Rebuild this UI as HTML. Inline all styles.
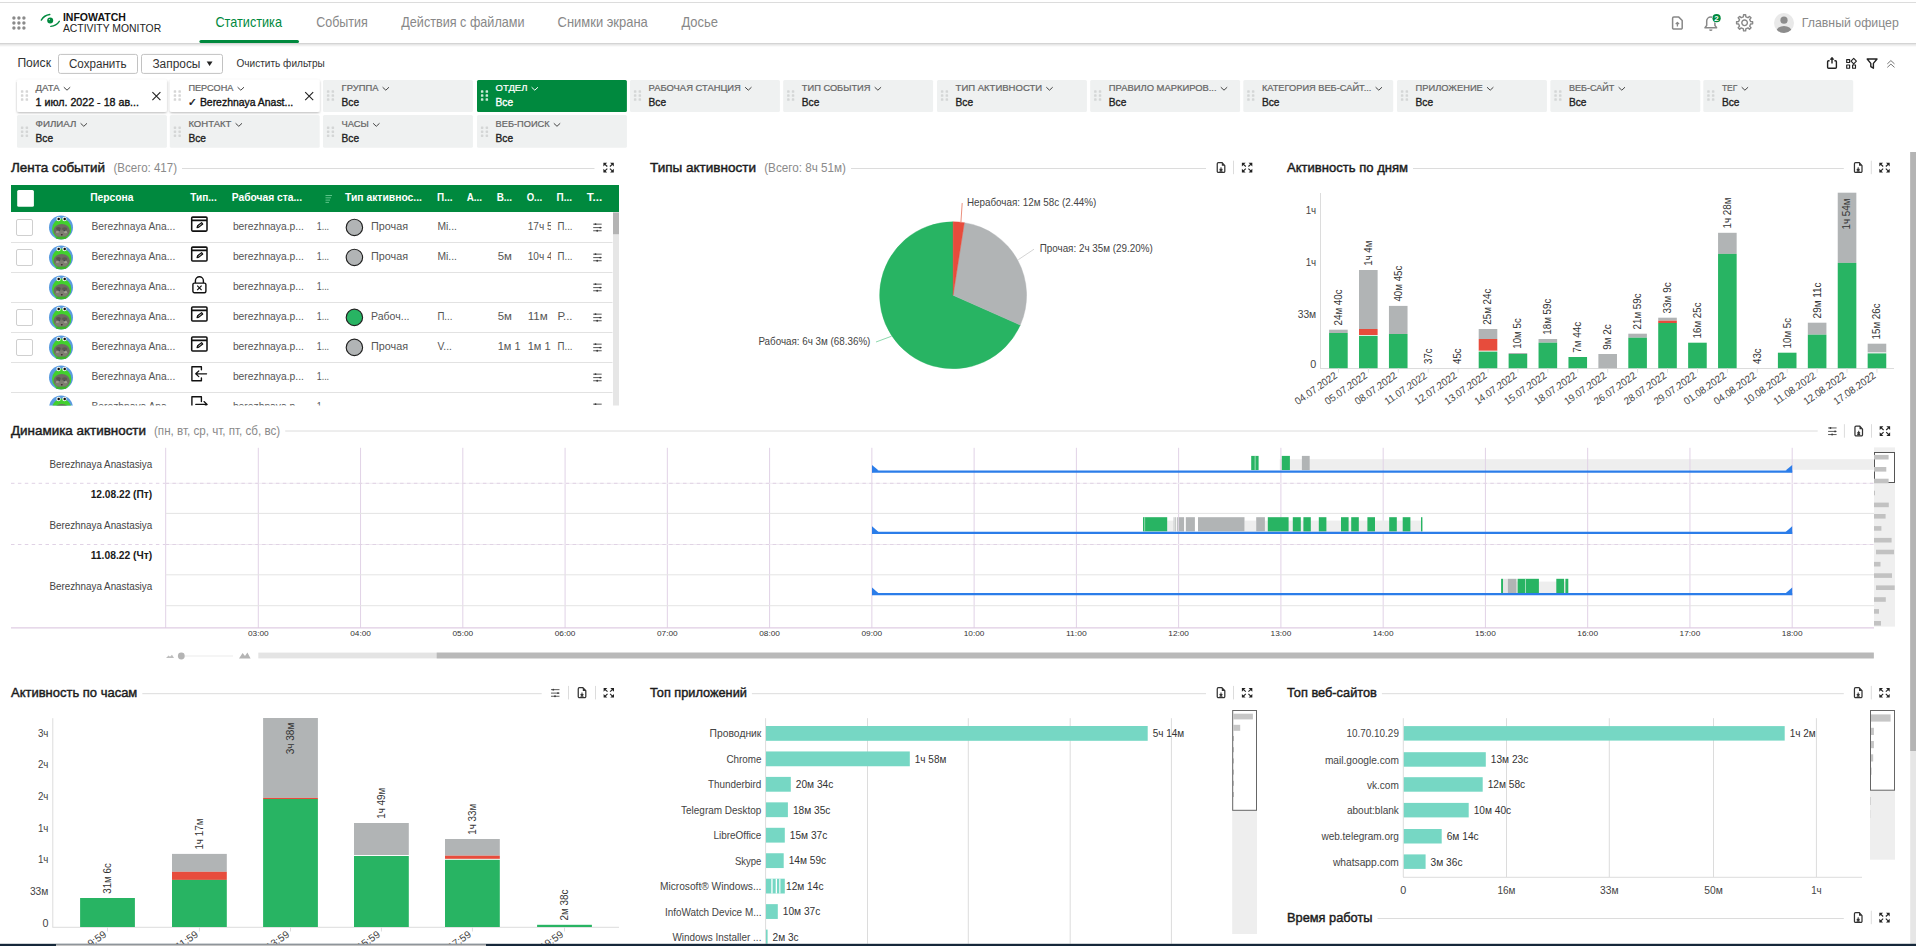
<!DOCTYPE html>
<html><head><meta charset="utf-8"><title>InfoWatch Activity Monitor</title>
<style>
html,body{margin:0;padding:0;background:#fff;overflow:hidden;width:1916px;height:946px}
svg{display:block;font-family:'Liberation Sans', sans-serif;}
text{white-space:pre}
</style></head><body>
<svg width="1916" height="946" viewBox="0 0 1916 946" font-family='"Liberation Sans", sans-serif'>
<defs>
<linearGradient id="hsh" x1="0" y1="0" x2="0" y2="1"><stop offset="0" stop-color="#000" stop-opacity="0.16"/><stop offset="1" stop-color="#000" stop-opacity="0"/></linearGradient>
<filter id="tsh" x="-10%" y="-20%" width="120%" height="150%"><feDropShadow dx="0" dy="1" stdDeviation="1" flood-color="#000" flood-opacity="0.28"/></filter>
<clipPath id="avc"><circle cx="0" cy="0" r="12"/></clipPath>
<g id="avatar">
  <circle cx="0" cy="0" r="12" fill="#5a9be0"/>
  <g clip-path="url(#avc)">
    <ellipse cx="0.7" cy="1.6" rx="9.7" ry="10.4" fill="#42cf2e"/>
    <ellipse cx="0.7" cy="3.4" rx="8.2" ry="6.9" fill="#6d6b62"/>
    <ellipse cx="-2.6" cy="1.2" rx="2.4" ry="1.6" fill="#57554e"/>
    <ellipse cx="3.6" cy="1.4" rx="2.6" ry="1.6" fill="#5b5952"/>
    <ellipse cx="0.6" cy="6.2" rx="6.4" ry="3.4" fill="#7f7d72"/>
    <ellipse cx="-3.6" cy="4.6" rx="1.6" ry="1.1" fill="#9a988e"/>
    <ellipse cx="4.6" cy="4.8" rx="1.6" ry="1.1" fill="#a09e94"/>
    <circle cx="-1.8" cy="3.2" r="0.7" fill="#2f3e46"/><circle cx="3.2" cy="3.2" r="0.7" fill="#2f3e46"/>
    <ellipse cx="0.8" cy="7.3" rx="0.9" ry="0.7" fill="#3a2422"/>
    <ellipse cx="0.7" cy="10.7" rx="6.4" ry="1.5" fill="#3cb42a"/>
  </g>
  <circle cx="-2.5" cy="-8.4" r="2.2" fill="#f4f8f4"/><circle cx="3.5" cy="-8.4" r="2.2" fill="#f4f8f4"/>
  <circle cx="-2.3" cy="-8.3" r="1.25" fill="#0c0c0c"/><circle cx="3.7" cy="-8.3" r="1.25" fill="#0c0c0c"/>
</g>
<g id="ic-expand" fill="#222" stroke="#222" stroke-width="1.15">
  <path d="M0 0 H3.7 L0 3.7 Z" stroke="none"/><path d="M1.3 1.3 L3.9 3.7"/>
  <path d="M10.4 0 H6.7 L10.4 3.7 Z" stroke="none"/><path d="M9.1 1.3 L6.5 3.7"/>
  <path d="M0 9.6 H3.7 L0 5.9 Z" stroke="none"/><path d="M1.3 8.3 L3.9 5.9"/>
  <path d="M10.4 9.6 H6.7 L10.4 5.9 Z" stroke="none"/><path d="M9.1 8.3 L6.5 5.9"/>
</g>
<g id="ic-file" stroke="#333" stroke-width="1.25" fill="none" stroke-linejoin="round">
  <path d="M0.65 1.8 a1.15 1.15 0 0 1 1.15 -1.15 H5.3 L8.2 3.7 V9.3 a1.15 1.15 0 0 1 -1.15 1.15 H1.8 a1.15 1.15 0 0 1 -1.15 -1.15 Z"/>
  <path d="M5.2 0.7 V3.8 H8.2 Z" fill="#333" stroke="none"/>
  <path d="M4.4 5.4 V8.2 M3 7.1 L4.4 8.4 L5.8 7.1 M2.9 9.2 H5.9" stroke-width="1.05"/>
</g>
<g id="ic-sliders" stroke="#484848" stroke-width="0.9" fill="#3c3c3c">
  <path d="M0.4 0.95 H8.9 M0.4 4.4 H8.9 M0.4 7.55 H8.9" fill="none"/>
  <circle cx="2.7" cy="0.95" r="0.95" stroke="none"/><circle cx="7.4" cy="4.4" r="0.95" stroke="none"/><circle cx="4.4" cy="7.55" r="0.95" stroke="none"/>
</g>
<g id="ic-win" stroke="#111" stroke-width="1.55" fill="none" stroke-linejoin="round">
  <rect x="0.7" y="0.7" width="15.3" height="14" rx="1"/>
  <path d="M0.7 3.9 H16" stroke-width="1.7"/>
  <path d="M6 11.2 L6.6 9.2 L10.6 6.2 L11.8 7.6 L7.9 10.7 Z" stroke-width="1.1" fill="#111"/>
  <path d="M7.3 10 L10.6 7.4" stroke="#fff" stroke-width="0.7"/>
</g>
<g id="ic-lock" stroke="#111" stroke-width="1.4" fill="none" stroke-linejoin="round">
  <rect x="0.7" y="6.4" width="13" height="9.6" rx="1.5"/>
  <path d="M3.2 6.4 V4 a4 4 0 0 1 8 0 V6.4"/>
  <path d="M5 9 L9.4 13.4 M9.4 9 L5 13.4" stroke-width="1.2"/>
</g>
<g id="ic-login" stroke="#111" stroke-width="1.4" fill="none" stroke-linejoin="round" stroke-linecap="round">
  <path d="M10.2 3.6 V0.7 H0.7 V14.7 H10.2 V11.8"/>
  <path d="M15.4 7.7 H4.6 M7.6 4.9 L4.5 7.7 L7.6 10.5" stroke-width="1.2"/>
</g>
<g id="ic-logout" stroke="#111" stroke-width="1.4" fill="none" stroke-linejoin="round" stroke-linecap="round">
  <path d="M10.2 5.4 V0.7 H0.7 V14.7"/>
  <path d="M4.6 8.3 H15.8 M12.8 5.5 L15.9 8.3 L12.8 11.1" stroke-width="1.3"/>
</g>
<g id="ic-chev" stroke-width="1" fill="none"><path d="M0 0 L3.2 3 L6.4 0"/></g>
<g id="ic-drag">
  <rect x="0" y="0" width="2.5" height="2.5" rx="0.6"/><rect x="4.7" y="0" width="2.5" height="2.5" rx="0.6"/>
  <rect x="0" y="4" width="2.5" height="2.5" rx="0.6"/><rect x="4.7" y="4" width="2.5" height="2.5" rx="0.6"/>
  <rect x="0" y="8" width="2.5" height="2.5" rx="0.6"/><rect x="4.7" y="8" width="2.5" height="2.5" rx="0.6"/>
</g>
</defs>
<rect x="0.00" y="43.00" width="1916.00" height="4.00" fill="url(#hsh)" />
<rect x="0.00" y="0.00" width="1916.00" height="43.00" fill="#fff" />
<line x1="0.00" y1="2.50" x2="1916.00" y2="2.50" stroke="#dcdcdc" stroke-width="1" />
<line x1="0.00" y1="43.50" x2="1916.00" y2="43.50" stroke="#d4d4d4" stroke-width="1" />
<circle cx="13.90" cy="18.00" r="1.70" fill="#8a8a8a" />
<circle cx="13.90" cy="23.00" r="1.70" fill="#8a8a8a" />
<circle cx="13.90" cy="28.00" r="1.70" fill="#8a8a8a" />
<circle cx="18.90" cy="18.00" r="1.70" fill="#8a8a8a" />
<circle cx="18.90" cy="23.00" r="1.70" fill="#8a8a8a" />
<circle cx="18.90" cy="28.00" r="1.70" fill="#8a8a8a" />
<circle cx="23.90" cy="18.00" r="1.70" fill="#8a8a8a" />
<circle cx="23.90" cy="23.00" r="1.70" fill="#8a8a8a" />
<circle cx="23.90" cy="28.00" r="1.70" fill="#8a8a8a" />
<path d="M41.3 20.1 A11.5 11.5 0 0 1 49.8 14.5" fill="none" stroke="#00893e" stroke-width="1.4" stroke-linecap="round"/>
<path d="M50.8 26.4 A11.5 11.5 0 0 0 59.3 21.3" fill="none" stroke="#00893e" stroke-width="1.4" stroke-linecap="round"/>
<circle cx="50.20" cy="20.40" r="3.00" fill="#00893e" />
<circle cx="49.40" cy="19.60" r="0.70" fill="#bfe6cf" />
<text x="62.90" y="21.00" font-size="10.4" fill="#111" font-weight="bold" textLength="63.00" lengthAdjust="spacingAndGlyphs" >INFOWATCH</text>
<text x="62.90" y="32.00" font-size="10.4" fill="#222" textLength="98.30" lengthAdjust="spacingAndGlyphs" >ACTIVITY MONITOR</text>
<text x="215.40" y="27.00" font-size="14.2" fill="#00893e" textLength="66.60" lengthAdjust="spacingAndGlyphs" >Статистика</text>
<text x="316.20" y="27.00" font-size="14.2" fill="#888" textLength="51.60" lengthAdjust="spacingAndGlyphs" >События</text>
<text x="401.30" y="27.00" font-size="14.2" fill="#888" textLength="123.20" lengthAdjust="spacingAndGlyphs" >Действия с файлами</text>
<text x="557.60" y="27.00" font-size="14.2" fill="#888" textLength="90.20" lengthAdjust="spacingAndGlyphs" >Снимки экрана</text>
<text x="681.40" y="27.00" font-size="14.2" fill="#888" textLength="36.60" lengthAdjust="spacingAndGlyphs" >Досье</text>
<rect x="199.40" y="40.00" width="99.60" height="3.10" fill="#00893e" rx="1.55"/>
<g transform="translate(1671.8,16.3)" stroke="#888" stroke-width="1.5" fill="none" stroke-linejoin="round">
<path d="M0.8 2 a1.2 1.2 0 0 1 1.2 -1.2 H7 L10.4 4.2 V11.6 a1.2 1.2 0 0 1 -1.2 1.2 H2 a1.2 1.2 0 0 1 -1.2 -1.2 Z" stroke="#888" stroke-width="1.5" />
<path d="M5.6 10.2 V6.2 M3.9 7.8 L5.6 6.1 L7.3 7.8" stroke="#888" stroke-width="1.3" />
</g>
<g transform="translate(1704,14.5)" fill="none" stroke="#888" stroke-width="1.5" stroke-linejoin="round">
<path d="M1 13.3 H12.6 L10.9 10.9 V6.6 a4.1 4.1 0 0 0 -8.2 0 V10.9 Z" stroke="#888" stroke-width="1.5" />
<path d="M5.6 15 a1.3 1.3 0 0 0 2.4 0" stroke="#888" stroke-width="1.4" />
</g>
<circle cx="1716.60" cy="18.20" r="4.70" fill="#fff" />
<circle cx="1716.60" cy="18.20" r="4.10" fill="#00893e" />
<text x="1716.60" y="21.10" font-size="8" fill="#fff" font-weight="bold" text-anchor="middle" >2</text>
<g transform="translate(1744.6,22.8)">
<path d="M-1.21 -5.98 L-1.05 -8.03 L1.05 -8.03 L1.21 -5.98 L3.37 -5.08 L4.94 -6.42 L6.42 -4.94 L5.08 -3.37 L5.98 -1.21 L8.03 -1.05 L8.03 1.05 L5.98 1.21 L5.08 3.37 L6.42 4.94 L4.94 6.42 L3.37 5.08 L1.21 5.98 L1.05 8.03 L-1.05 8.03 L-1.21 5.98 L-3.37 5.08 L-4.94 6.42 L-6.42 4.94 L-5.08 3.37 L-5.98 1.21 L-8.03 1.05 L-8.03 -1.05 L-5.98 -1.21 L-5.08 -3.37 L-6.42 -4.94 L-4.94 -6.42 L-3.37 -5.08 Z" fill="none" stroke="#888" stroke-width="1.4" stroke-linejoin="round"/>
<circle cx="0" cy="0" r="2.8" fill="none" stroke="#888" stroke-width="1.4"/>
</g>
<circle cx="1784.00" cy="23.00" r="10.00" fill="#e9e9e9" />
<clipPath id="uc"><circle cx="1784" cy="23" r="10"/></clipPath>
<g clip-path="url(#uc)">
<circle cx="1784.00" cy="20.20" r="3.60" fill="#8c8c8c" />
<ellipse cx="1784" cy="31.2" rx="7.6" ry="5.2" fill="#8c8c8c"/>
</g>
<text x="1801.80" y="26.90" font-size="13.2" fill="#888" textLength="97.00" lengthAdjust="spacingAndGlyphs" >Главный офицер</text>
<text x="17.40" y="66.80" font-size="12.3" fill="#333" textLength="33.60" lengthAdjust="spacingAndGlyphs" >Поиск</text>
<rect x="58.50" y="54.40" width="79.00" height="19.00" fill="#fff" stroke="#c2c2c2" stroke-width="1" rx="2"/>
<text x="68.90" y="67.90" font-size="12.5" fill="#333" textLength="57.80" lengthAdjust="spacingAndGlyphs" >Сохранить</text>
<rect x="141.50" y="54.40" width="81.00" height="19.00" fill="#fff" stroke="#c2c2c2" stroke-width="1" rx="2"/>
<text x="152.40" y="67.90" font-size="12.5" fill="#333" textLength="48.00" lengthAdjust="spacingAndGlyphs" >Запросы</text>
<path d="M206.7 61.6 H212.5 L209.6 66 Z" fill="#222" />
<text x="236.50" y="66.90" font-size="10.4" fill="#333" textLength="88.30" lengthAdjust="spacingAndGlyphs" >Очистить фильтры</text>
<g stroke="#222" stroke-width="1.4" fill="none" stroke-linejoin="round">
<path d="M1829.6 60.7 H1828.6 a1 1 0 0 0 -1 1 V67.3 a1 1 0 0 0 1 1 H1835.4 a1 1 0 0 0 1 -1 V61.7 a1 1 0 0 0 -1 -1 H1834.4 M1832 63.6 V58.2" />
<path d="M1830.3 59.4 L1832 57.2 L1833.7 59.4 Z" fill="#222" stroke-width="0.8" />
<path d="M1846.7 59.6 H1849.6 V62.5 H1846.7 Z M1846.7 65 H1849.6 V68.2 H1846.7 Z M1852.6 65 H1855.5 V68.2 H1852.6 Z M1853.7 58.4 L1856.4 61.1 L1853.7 63.8 L1851 61.1 Z" stroke-width="1.15" />
<path d="M1867.2 59 H1877 L1873.4 63.4 V68.2 L1870.8 66.6 V63.4 Z" />
<path d="M1887.3 63.9 L1890.9 60.6 L1894.5 63.9 M1887.3 67.4 L1890.9 64.1 L1894.5 67.4" stroke="#666" stroke-width="0.9" />
</g>
<rect x="17.00" y="79.60" width="149.90" height="32.40" fill="#fff" rx="2" filter="url(#tsh)"/>
<use href="#ic-drag" x="20.90" y="90.30" fill="#d6d6d6"/>
<text x="35.60" y="90.60" font-size="9.6" fill="#666" textLength="24.00" lengthAdjust="spacingAndGlyphs" stroke="#666" stroke-width="0.22">ДАТА</text>
<use href="#ic-chev" x="63.80" y="87.20" stroke="#444"/>
<text x="35.60" y="106.00" font-size="10.9" fill="#111" textLength="103.40" lengthAdjust="spacingAndGlyphs" stroke="#111" stroke-width="0.35">1 июл. 2022 - 18 ав...</text>
<path d="M152.40 92.10000000000001 l8 8 m0 -8 l-8 8" stroke="#222" stroke-width="1.1" />
<rect x="169.80" y="79.60" width="149.90" height="32.40" fill="#fff" rx="2" filter="url(#tsh)"/>
<use href="#ic-drag" x="173.70" y="90.30" fill="#d6d6d6"/>
<text x="188.40" y="90.60" font-size="9.6" fill="#666" textLength="45.00" lengthAdjust="spacingAndGlyphs" stroke="#666" stroke-width="0.22">ПЕРСОНА</text>
<use href="#ic-chev" x="237.60" y="87.20" stroke="#444"/>
<text x="188.40" y="106.00" font-size="10.9" fill="#111" textLength="104.80" lengthAdjust="spacingAndGlyphs" stroke="#111" stroke-width="0.35">✓ Berezhnaya Anast...</text>
<path d="M305.20 92.10000000000001 l8 8 m0 -8 l-8 8" stroke="#222" stroke-width="1.1" />
<rect x="323.00" y="79.90" width="149.90" height="32.10" fill="#eff1f1" rx="1.5"/>
<use href="#ic-drag" x="326.90" y="90.30" fill="#d4d6d6"/>
<text x="341.60" y="90.60" font-size="9.6" fill="#666" textLength="36.80" lengthAdjust="spacingAndGlyphs" stroke="#666" stroke-width="0.22">ГРУППА</text>
<use href="#ic-chev" x="382.60" y="87.20" stroke="#444"/>
<text x="341.60" y="106.00" font-size="10.9" fill="#222" textLength="17.50" lengthAdjust="spacingAndGlyphs" stroke="#222" stroke-width="0.35">Все</text>
<rect x="477.00" y="79.90" width="149.90" height="32.10" fill="#00893e" rx="1.5"/>
<use href="#ic-drag" x="480.90" y="90.30" fill="#c9ead6"/>
<text x="495.60" y="90.60" font-size="9.6" fill="#fff" textLength="31.80" lengthAdjust="spacingAndGlyphs" stroke="#fff" stroke-width="0.22">ОТДЕЛ</text>
<use href="#ic-chev" x="531.60" y="87.20" stroke="#fff"/>
<text x="495.60" y="106.00" font-size="10.9" fill="#fff" textLength="17.50" lengthAdjust="spacingAndGlyphs" stroke="#fff" stroke-width="0.35">Все</text>
<rect x="630.00" y="79.90" width="149.90" height="32.10" fill="#eff1f1" rx="1.5"/>
<use href="#ic-drag" x="633.90" y="90.30" fill="#d4d6d6"/>
<text x="648.60" y="90.60" font-size="9.6" fill="#666" textLength="92.30" lengthAdjust="spacingAndGlyphs" stroke="#666" stroke-width="0.22">РАБОЧАЯ СТАНЦИЯ</text>
<use href="#ic-chev" x="745.10" y="87.20" stroke="#444"/>
<text x="648.60" y="106.00" font-size="10.9" fill="#222" textLength="17.50" lengthAdjust="spacingAndGlyphs" stroke="#222" stroke-width="0.35">Все</text>
<rect x="783.20" y="79.90" width="149.90" height="32.10" fill="#eff1f1" rx="1.5"/>
<use href="#ic-drag" x="787.10" y="90.30" fill="#d4d6d6"/>
<text x="801.80" y="90.60" font-size="9.6" fill="#666" textLength="68.70" lengthAdjust="spacingAndGlyphs" stroke="#666" stroke-width="0.22">ТИП СОБЫТИЯ</text>
<use href="#ic-chev" x="874.70" y="87.20" stroke="#444"/>
<text x="801.80" y="106.00" font-size="10.9" fill="#222" textLength="17.50" lengthAdjust="spacingAndGlyphs" stroke="#222" stroke-width="0.35">Все</text>
<rect x="937.00" y="79.90" width="149.90" height="32.10" fill="#eff1f1" rx="1.5"/>
<use href="#ic-drag" x="940.90" y="90.30" fill="#d4d6d6"/>
<text x="955.60" y="90.60" font-size="9.6" fill="#666" textLength="86.50" lengthAdjust="spacingAndGlyphs" stroke="#666" stroke-width="0.22">ТИП АКТИВНОСТИ</text>
<use href="#ic-chev" x="1046.30" y="87.20" stroke="#444"/>
<text x="955.60" y="106.00" font-size="10.9" fill="#222" textLength="17.50" lengthAdjust="spacingAndGlyphs" stroke="#222" stroke-width="0.35">Все</text>
<rect x="1090.20" y="79.90" width="149.90" height="32.10" fill="#eff1f1" rx="1.5"/>
<use href="#ic-drag" x="1094.10" y="90.30" fill="#d4d6d6"/>
<text x="1108.80" y="90.60" font-size="9.6" fill="#666" textLength="107.80" lengthAdjust="spacingAndGlyphs" stroke="#666" stroke-width="0.22">ПРАВИЛО МАРКИРОВ...</text>
<use href="#ic-chev" x="1220.80" y="87.20" stroke="#444"/>
<text x="1108.80" y="106.00" font-size="10.9" fill="#222" textLength="17.50" lengthAdjust="spacingAndGlyphs" stroke="#222" stroke-width="0.35">Все</text>
<rect x="1243.30" y="79.90" width="149.90" height="32.10" fill="#eff1f1" rx="1.5"/>
<use href="#ic-drag" x="1247.20" y="90.30" fill="#d4d6d6"/>
<text x="1261.90" y="90.60" font-size="9.6" fill="#666" textLength="109.50" lengthAdjust="spacingAndGlyphs" stroke="#666" stroke-width="0.22">КАТЕГОРИЯ ВЕБ-САЙТ...</text>
<use href="#ic-chev" x="1375.60" y="87.20" stroke="#444"/>
<text x="1261.90" y="106.00" font-size="10.9" fill="#222" textLength="17.50" lengthAdjust="spacingAndGlyphs" stroke="#222" stroke-width="0.35">Все</text>
<rect x="1397.00" y="79.90" width="149.90" height="32.10" fill="#eff1f1" rx="1.5"/>
<use href="#ic-drag" x="1400.90" y="90.30" fill="#d4d6d6"/>
<text x="1415.60" y="90.60" font-size="9.6" fill="#666" textLength="67.20" lengthAdjust="spacingAndGlyphs" stroke="#666" stroke-width="0.22">ПРИЛОЖЕНИЕ</text>
<use href="#ic-chev" x="1487.00" y="87.20" stroke="#444"/>
<text x="1415.60" y="106.00" font-size="10.9" fill="#222" textLength="17.50" lengthAdjust="spacingAndGlyphs" stroke="#222" stroke-width="0.35">Все</text>
<rect x="1550.40" y="79.90" width="149.90" height="32.10" fill="#eff1f1" rx="1.5"/>
<use href="#ic-drag" x="1554.30" y="90.30" fill="#d4d6d6"/>
<text x="1569.00" y="90.60" font-size="9.6" fill="#666" textLength="45.40" lengthAdjust="spacingAndGlyphs" stroke="#666" stroke-width="0.22">ВЕБ-САЙТ</text>
<use href="#ic-chev" x="1618.60" y="87.20" stroke="#444"/>
<text x="1569.00" y="106.00" font-size="10.9" fill="#222" textLength="17.50" lengthAdjust="spacingAndGlyphs" stroke="#222" stroke-width="0.35">Все</text>
<rect x="1703.30" y="79.90" width="149.90" height="32.10" fill="#eff1f1" rx="1.5"/>
<use href="#ic-drag" x="1707.20" y="90.30" fill="#d4d6d6"/>
<text x="1721.90" y="90.60" font-size="9.6" fill="#666" textLength="15.60" lengthAdjust="spacingAndGlyphs" stroke="#666" stroke-width="0.22">ТЕГ</text>
<use href="#ic-chev" x="1741.70" y="87.20" stroke="#444"/>
<text x="1721.90" y="106.00" font-size="10.9" fill="#222" textLength="17.50" lengthAdjust="spacingAndGlyphs" stroke="#222" stroke-width="0.35">Все</text>
<rect x="17.00" y="115.00" width="149.90" height="32.70" fill="#eff1f1" rx="1.5"/>
<use href="#ic-drag" x="20.90" y="126.40" fill="#d4d6d6"/>
<text x="35.60" y="126.70" font-size="9.6" fill="#666" textLength="40.80" lengthAdjust="spacingAndGlyphs" stroke="#666" stroke-width="0.22">ФИЛИАЛ</text>
<use href="#ic-chev" x="80.60" y="123.30" stroke="#444"/>
<text x="35.60" y="141.80" font-size="10.9" fill="#222" textLength="17.50" lengthAdjust="spacingAndGlyphs" stroke="#222" stroke-width="0.35">Все</text>
<rect x="169.80" y="115.00" width="149.90" height="32.70" fill="#eff1f1" rx="1.5"/>
<use href="#ic-drag" x="173.70" y="126.40" fill="#d4d6d6"/>
<text x="188.40" y="126.70" font-size="9.6" fill="#666" textLength="43.00" lengthAdjust="spacingAndGlyphs" stroke="#666" stroke-width="0.22">КОНТАКТ</text>
<use href="#ic-chev" x="235.60" y="123.30" stroke="#444"/>
<text x="188.40" y="141.80" font-size="10.9" fill="#222" textLength="17.50" lengthAdjust="spacingAndGlyphs" stroke="#222" stroke-width="0.35">Все</text>
<rect x="323.00" y="115.00" width="149.90" height="32.70" fill="#eff1f1" rx="1.5"/>
<use href="#ic-drag" x="326.90" y="126.40" fill="#d4d6d6"/>
<text x="341.60" y="126.70" font-size="9.6" fill="#666" textLength="27.30" lengthAdjust="spacingAndGlyphs" stroke="#666" stroke-width="0.22">ЧАСЫ</text>
<use href="#ic-chev" x="373.10" y="123.30" stroke="#444"/>
<text x="341.60" y="141.80" font-size="10.9" fill="#222" textLength="17.50" lengthAdjust="spacingAndGlyphs" stroke="#222" stroke-width="0.35">Все</text>
<rect x="477.00" y="115.00" width="149.90" height="32.70" fill="#eff1f1" rx="1.5"/>
<use href="#ic-drag" x="480.90" y="126.40" fill="#d4d6d6"/>
<text x="495.60" y="126.70" font-size="9.6" fill="#666" textLength="54.00" lengthAdjust="spacingAndGlyphs" stroke="#666" stroke-width="0.22">ВЕБ-ПОИСК</text>
<use href="#ic-chev" x="553.80" y="123.30" stroke="#444"/>
<text x="495.60" y="141.80" font-size="10.9" fill="#222" textLength="17.50" lengthAdjust="spacingAndGlyphs" stroke="#222" stroke-width="0.35">Все</text>
<text x="11.00" y="171.70" font-size="13.4" fill="#1c1c1c" textLength="94.00" lengthAdjust="spacingAndGlyphs" stroke="#1c1c1c" stroke-width="0.45">Лента событий</text>
<text x="113.50" y="171.70" font-size="12.8" fill="#8a8a8a" textLength="63.50" lengthAdjust="spacingAndGlyphs" >(Всего: 417)</text>
<line x1="182.00" y1="168.50" x2="594.50" y2="168.50" stroke="#dcdcdc" stroke-width="1" />
<use href="#ic-expand" x="603.40" y="162.80"/>
<text x="650.00" y="171.70" font-size="13.4" fill="#1c1c1c" textLength="106.00" lengthAdjust="spacingAndGlyphs" stroke="#1c1c1c" stroke-width="0.45">Типы активности</text>
<text x="764.20" y="171.70" font-size="12.8" fill="#8a8a8a" textLength="81.80" lengthAdjust="spacingAndGlyphs" >(Всего: 8ч 51м)</text>
<line x1="851.00" y1="168.50" x2="1206.00" y2="168.50" stroke="#dcdcdc" stroke-width="1" />
<use href="#ic-file" x="1216.60" y="161.90"/>
<line x1="1233.50" y1="160.70" x2="1233.50" y2="174.20" stroke="#dcdcdc" stroke-width="1" />
<use href="#ic-expand" x="1241.90" y="162.80"/>
<text x="1287.00" y="171.70" font-size="13.4" fill="#1c1c1c" textLength="121.00" lengthAdjust="spacingAndGlyphs" stroke="#1c1c1c" stroke-width="0.45">Активность по дням</text>
<line x1="1413.00" y1="168.50" x2="1843.80" y2="168.50" stroke="#dcdcdc" stroke-width="1" />
<use href="#ic-file" x="1853.80" y="161.90"/>
<line x1="1871.30" y1="160.70" x2="1871.30" y2="174.20" stroke="#dcdcdc" stroke-width="1" />
<use href="#ic-expand" x="1879.30" y="162.80"/>
<text x="11.00" y="435.20" font-size="13.4" fill="#1c1c1c" textLength="135.00" lengthAdjust="spacingAndGlyphs" stroke="#1c1c1c" stroke-width="0.45">Динамика активности</text>
<text x="154.00" y="435.20" font-size="12.8" fill="#8a8a8a" textLength="126.20" lengthAdjust="spacingAndGlyphs" >(пн, вт, ср, чт, пт, сб, вс)</text>
<line x1="285.20" y1="431.00" x2="1817.70" y2="431.00" stroke="#dcdcdc" stroke-width="1" />
<use href="#ic-sliders" x="1827.70" y="427.00"/>
<line x1="1844.40" y1="424.20" x2="1844.40" y2="437.70" stroke="#dcdcdc" stroke-width="1" />
<use href="#ic-file" x="1854.30" y="425.40"/>
<line x1="1871.50" y1="424.20" x2="1871.50" y2="437.70" stroke="#dcdcdc" stroke-width="1" />
<use href="#ic-expand" x="1879.70" y="426.30"/>
<text x="11.00" y="696.90" font-size="13.4" fill="#1c1c1c" textLength="126.30" lengthAdjust="spacingAndGlyphs" stroke="#1c1c1c" stroke-width="0.45">Активность по часам</text>
<line x1="142.30" y1="693.70" x2="541.70" y2="693.70" stroke="#dcdcdc" stroke-width="1" />
<use href="#ic-sliders" x="550.60" y="688.70"/>
<line x1="568.50" y1="685.90" x2="568.50" y2="699.40" stroke="#dcdcdc" stroke-width="1" />
<use href="#ic-file" x="577.60" y="687.10"/>
<line x1="595.50" y1="685.90" x2="595.50" y2="699.40" stroke="#dcdcdc" stroke-width="1" />
<use href="#ic-expand" x="603.60" y="688.00"/>
<text x="650.00" y="696.90" font-size="13.4" fill="#1c1c1c" textLength="96.90" lengthAdjust="spacingAndGlyphs" stroke="#1c1c1c" stroke-width="0.45">Топ приложений</text>
<line x1="751.90" y1="693.70" x2="1206.00" y2="693.70" stroke="#dcdcdc" stroke-width="1" />
<use href="#ic-file" x="1216.60" y="687.10"/>
<line x1="1233.50" y1="685.90" x2="1233.50" y2="699.40" stroke="#dcdcdc" stroke-width="1" />
<use href="#ic-expand" x="1241.90" y="688.00"/>
<text x="1287.00" y="696.90" font-size="13.4" fill="#1c1c1c" textLength="89.90" lengthAdjust="spacingAndGlyphs" stroke="#1c1c1c" stroke-width="0.45">Топ веб-сайтов</text>
<line x1="1381.90" y1="693.70" x2="1843.80" y2="693.70" stroke="#dcdcdc" stroke-width="1" />
<use href="#ic-file" x="1853.80" y="687.10"/>
<line x1="1871.30" y1="685.90" x2="1871.30" y2="699.40" stroke="#dcdcdc" stroke-width="1" />
<use href="#ic-expand" x="1879.30" y="688.00"/>
<text x="1287.00" y="921.70" font-size="13.4" fill="#1c1c1c" textLength="85.50" lengthAdjust="spacingAndGlyphs" stroke="#1c1c1c" stroke-width="0.45">Время работы</text>
<line x1="1377.50" y1="918.50" x2="1843.80" y2="918.50" stroke="#dcdcdc" stroke-width="1" />
<use href="#ic-file" x="1853.80" y="911.90"/>
<line x1="1871.30" y1="910.70" x2="1871.30" y2="924.20" stroke="#dcdcdc" stroke-width="1" />
<use href="#ic-expand" x="1879.30" y="912.80"/>
<clipPath id="tblc"><rect x="0" y="180" width="640" height="225.6"/></clipPath>
<g clip-path="url(#tblc)">
<rect x="11.00" y="185.00" width="608.00" height="27.00" fill="#00893e" />
<rect x="17.20" y="190.00" width="16.70" height="16.70" fill="#fff" rx="1.5"/>
<text x="90.20" y="201.20" font-size="10.9" fill="#fff" font-weight="bold" textLength="43.30" lengthAdjust="spacingAndGlyphs" >Персона</text>
<text x="190.30" y="201.20" font-size="10.9" fill="#fff" font-weight="bold" textLength="26.40" lengthAdjust="spacingAndGlyphs" >Тип...</text>
<text x="231.70" y="201.20" font-size="10.9" fill="#fff" font-weight="bold" textLength="70.40" lengthAdjust="spacingAndGlyphs" >Рабочая ста...</text>
<g stroke="#5cc489" stroke-width="1">
<path d="M325.5 195.5 H332 M325.5 197.8 H331 M325.5 200.1 H330 M325.5 202.4 H329" />
</g>
<text x="345.00" y="201.20" font-size="10.9" fill="#fff" font-weight="bold" textLength="77.00" lengthAdjust="spacingAndGlyphs" >Тип активнос...</text>
<text x="437.00" y="201.20" font-size="10.9" fill="#fff" font-weight="bold" textLength="15.40" lengthAdjust="spacingAndGlyphs" >П...</text>
<text x="466.70" y="201.20" font-size="10.9" fill="#fff" font-weight="bold" textLength="15.40" lengthAdjust="spacingAndGlyphs" >А...</text>
<text x="496.70" y="201.20" font-size="10.9" fill="#fff" font-weight="bold" textLength="15.40" lengthAdjust="spacingAndGlyphs" >В...</text>
<text x="526.70" y="201.20" font-size="10.9" fill="#fff" font-weight="bold" textLength="15.40" lengthAdjust="spacingAndGlyphs" >О...</text>
<text x="556.60" y="201.20" font-size="10.9" fill="#fff" font-weight="bold" textLength="15.40" lengthAdjust="spacingAndGlyphs" >П...</text>
<text x="586.80" y="201.20" font-size="10.9" fill="#fff" font-weight="bold" textLength="15.40" lengthAdjust="spacingAndGlyphs" >Т...</text>
<line x1="11.00" y1="242.50" x2="612.50" y2="242.50" stroke="#e2e2e2" stroke-width="1" />
<rect x="16.50" y="219.50" width="16.00" height="16.00" fill="#fff" stroke="#cfcfcf" stroke-width="1" rx="1.5"/>
<use href="#avatar" x="61" y="227.40"/>
<text x="91.50" y="230.00" font-size="11.6" fill="#555" textLength="83.80" lengthAdjust="spacingAndGlyphs" >Berezhnaya Ana...</text>
<use href="#ic-win" x="191" y="216.40"/>
<text x="232.90" y="230.00" font-size="11.6" fill="#555" textLength="71.00" lengthAdjust="spacingAndGlyphs" >berezhnaya.p...</text>
<text x="316.70" y="230.00" font-size="11.6" fill="#555" textLength="12.40" lengthAdjust="spacingAndGlyphs" >1...</text>
<circle cx="354.40" cy="227.40" r="8.20" fill="#b1b4b5" stroke="#222" stroke-width="1.15"/>
<text x="371.00" y="230.00" font-size="11.6" fill="#555" textLength="37.00" lengthAdjust="spacingAndGlyphs" >Прочая</text>
<text x="437.40" y="230.00" font-size="11.6" fill="#555" textLength="19.50" lengthAdjust="spacingAndGlyphs" >Mi...</text>
<clipPath id="c40"><rect x="520" y="212" width="31" height="30"/></clipPath>
<text x="527.70" y="230.00" font-size="11.6" fill="#555" textLength="30.50" lengthAdjust="spacingAndGlyphs" clip-path="url(#c40)">17ч 58</text>
<text x="557.50" y="230.00" font-size="11.6" fill="#555" textLength="15.00" lengthAdjust="spacingAndGlyphs" >П...</text>
<use href="#ic-sliders" x="592.8" y="223.20" />
<line x1="11.00" y1="272.50" x2="612.50" y2="272.50" stroke="#e2e2e2" stroke-width="1" />
<rect x="16.50" y="249.50" width="16.00" height="16.00" fill="#fff" stroke="#cfcfcf" stroke-width="1" rx="1.5"/>
<use href="#avatar" x="61" y="257.40"/>
<text x="91.50" y="260.00" font-size="11.6" fill="#555" textLength="83.80" lengthAdjust="spacingAndGlyphs" >Berezhnaya Ana...</text>
<use href="#ic-win" x="191" y="246.40"/>
<text x="232.90" y="260.00" font-size="11.6" fill="#555" textLength="71.00" lengthAdjust="spacingAndGlyphs" >berezhnaya.p...</text>
<text x="316.70" y="260.00" font-size="11.6" fill="#555" textLength="12.40" lengthAdjust="spacingAndGlyphs" >1...</text>
<circle cx="354.40" cy="257.40" r="8.20" fill="#b1b4b5" stroke="#222" stroke-width="1.15"/>
<text x="371.00" y="260.00" font-size="11.6" fill="#555" textLength="37.00" lengthAdjust="spacingAndGlyphs" >Прочая</text>
<text x="437.40" y="260.00" font-size="11.6" fill="#555" textLength="19.50" lengthAdjust="spacingAndGlyphs" >Mi...</text>
<clipPath id="c31"><rect x="490" y="242" width="30.5" height="30"/></clipPath>
<text x="497.70" y="260.00" font-size="11.6" fill="#555" textLength="14.20" lengthAdjust="spacingAndGlyphs" clip-path="url(#c31)">5м</text>
<clipPath id="c41"><rect x="520" y="242" width="31" height="30"/></clipPath>
<text x="527.70" y="260.00" font-size="11.6" fill="#555" textLength="30.50" lengthAdjust="spacingAndGlyphs" clip-path="url(#c41)">10ч 45</text>
<text x="557.50" y="260.00" font-size="11.6" fill="#555" textLength="15.00" lengthAdjust="spacingAndGlyphs" >П...</text>
<use href="#ic-sliders" x="592.8" y="253.20" />
<line x1="11.00" y1="302.50" x2="612.50" y2="302.50" stroke="#e2e2e2" stroke-width="1" />
<use href="#avatar" x="61" y="287.40"/>
<text x="91.50" y="290.00" font-size="11.6" fill="#555" textLength="83.80" lengthAdjust="spacingAndGlyphs" >Berezhnaya Ana...</text>
<use href="#ic-lock" x="192.2" y="276.70"/>
<text x="232.90" y="290.00" font-size="11.6" fill="#555" textLength="71.00" lengthAdjust="spacingAndGlyphs" >berezhnaya.p...</text>
<text x="316.70" y="290.00" font-size="11.6" fill="#555" textLength="12.40" lengthAdjust="spacingAndGlyphs" >1...</text>
<use href="#ic-sliders" x="592.8" y="283.20" />
<line x1="11.00" y1="332.50" x2="612.50" y2="332.50" stroke="#e2e2e2" stroke-width="1" />
<rect x="16.50" y="309.50" width="16.00" height="16.00" fill="#fff" stroke="#cfcfcf" stroke-width="1" rx="1.5"/>
<use href="#avatar" x="61" y="317.40"/>
<text x="91.50" y="320.00" font-size="11.6" fill="#555" textLength="83.80" lengthAdjust="spacingAndGlyphs" >Berezhnaya Ana...</text>
<use href="#ic-win" x="191" y="306.40"/>
<text x="232.90" y="320.00" font-size="11.6" fill="#555" textLength="71.00" lengthAdjust="spacingAndGlyphs" >berezhnaya.p...</text>
<text x="316.70" y="320.00" font-size="11.6" fill="#555" textLength="12.40" lengthAdjust="spacingAndGlyphs" >1...</text>
<circle cx="354.40" cy="317.40" r="8.20" fill="#28b463" stroke="#222" stroke-width="1.15"/>
<text x="371.00" y="320.00" font-size="11.6" fill="#555" textLength="38.50" lengthAdjust="spacingAndGlyphs" >Рабоч...</text>
<text x="437.40" y="320.00" font-size="11.6" fill="#555" textLength="15.00" lengthAdjust="spacingAndGlyphs" >П...</text>
<clipPath id="c33"><rect x="490" y="302" width="30.5" height="30"/></clipPath>
<text x="497.70" y="320.00" font-size="11.6" fill="#555" textLength="14.20" lengthAdjust="spacingAndGlyphs" clip-path="url(#c33)">5м</text>
<clipPath id="c43"><rect x="520" y="302" width="31" height="30"/></clipPath>
<text x="527.70" y="320.00" font-size="11.6" fill="#555" textLength="20.00" lengthAdjust="spacingAndGlyphs" clip-path="url(#c43)">11м</text>
<text x="557.50" y="320.00" font-size="11.6" fill="#555" textLength="15.00" lengthAdjust="spacingAndGlyphs" >Р...</text>
<use href="#ic-sliders" x="592.8" y="313.20" />
<line x1="11.00" y1="362.50" x2="612.50" y2="362.50" stroke="#e2e2e2" stroke-width="1" />
<rect x="16.50" y="339.50" width="16.00" height="16.00" fill="#fff" stroke="#cfcfcf" stroke-width="1" rx="1.5"/>
<use href="#avatar" x="61" y="347.40"/>
<text x="91.50" y="350.00" font-size="11.6" fill="#555" textLength="83.80" lengthAdjust="spacingAndGlyphs" >Berezhnaya Ana...</text>
<use href="#ic-win" x="191" y="336.40"/>
<text x="232.90" y="350.00" font-size="11.6" fill="#555" textLength="71.00" lengthAdjust="spacingAndGlyphs" >berezhnaya.p...</text>
<text x="316.70" y="350.00" font-size="11.6" fill="#555" textLength="12.40" lengthAdjust="spacingAndGlyphs" >1...</text>
<circle cx="354.40" cy="347.40" r="8.20" fill="#b1b4b5" stroke="#222" stroke-width="1.15"/>
<text x="371.00" y="350.00" font-size="11.6" fill="#555" textLength="37.00" lengthAdjust="spacingAndGlyphs" >Прочая</text>
<text x="437.40" y="350.00" font-size="11.6" fill="#555" textLength="14.50" lengthAdjust="spacingAndGlyphs" >V...</text>
<clipPath id="c34"><rect x="490" y="332" width="30.5" height="30"/></clipPath>
<text x="497.70" y="350.00" font-size="11.6" fill="#555" textLength="29.00" lengthAdjust="spacingAndGlyphs" clip-path="url(#c34)">1м 12</text>
<clipPath id="c44"><rect x="520" y="332" width="31" height="30"/></clipPath>
<text x="527.70" y="350.00" font-size="11.6" fill="#555" textLength="29.00" lengthAdjust="spacingAndGlyphs" clip-path="url(#c44)">1м 12</text>
<text x="557.50" y="350.00" font-size="11.6" fill="#555" textLength="15.00" lengthAdjust="spacingAndGlyphs" >П...</text>
<use href="#ic-sliders" x="592.8" y="343.20" />
<line x1="11.00" y1="392.50" x2="612.50" y2="392.50" stroke="#e2e2e2" stroke-width="1" />
<use href="#avatar" x="61" y="377.40"/>
<text x="91.50" y="380.00" font-size="11.6" fill="#555" textLength="83.80" lengthAdjust="spacingAndGlyphs" >Berezhnaya Ana...</text>
<use href="#ic-login" x="191.2" y="366.10"/>
<text x="232.90" y="380.00" font-size="11.6" fill="#555" textLength="71.00" lengthAdjust="spacingAndGlyphs" >berezhnaya.p...</text>
<text x="316.70" y="380.00" font-size="11.6" fill="#555" textLength="12.40" lengthAdjust="spacingAndGlyphs" >1...</text>
<use href="#ic-sliders" x="592.8" y="373.20" />
<line x1="11.00" y1="422.50" x2="612.50" y2="422.50" stroke="#e2e2e2" stroke-width="1" />
<use href="#avatar" x="61" y="407.40"/>
<text x="91.50" y="410.00" font-size="11.6" fill="#555" textLength="83.80" lengthAdjust="spacingAndGlyphs" >Berezhnaya Ana...</text>
<use href="#ic-logout" x="191.2" y="396.10"/>
<text x="232.90" y="410.00" font-size="11.6" fill="#555" textLength="71.00" lengthAdjust="spacingAndGlyphs" >berezhnaya.p...</text>
<text x="316.70" y="410.00" font-size="11.6" fill="#555" textLength="12.40" lengthAdjust="spacingAndGlyphs" >1...</text>
<use href="#ic-sliders" x="592.8" y="403.20" />
<rect x="613.00" y="212.00" width="6.00" height="200.00" fill="#e6e6e6" />
<rect x="613.00" y="212.60" width="6.00" height="21.60" fill="#b4b4b4" />
</g>
<path d="M953.1 295.3 L1020.30 325.08 A73.5 73.5 0 1 1 953.10 221.80 Z" fill="#28b463" stroke="#28b463" stroke-width="0.4" />
<path d="M953.1 295.3 L964.32 222.66 A73.5 73.5 0 0 1 1020.30 325.08 Z" fill="#b1b4b5" stroke="#b1b4b5" stroke-width="0.4" />
<path d="M953.1 295.3 L953.10 221.80 A73.5 73.5 0 0 1 964.32 222.66 Z" fill="#e74c3c" stroke="#e74c3c" stroke-width="0.4" />
<line x1="960.90" y1="222.50" x2="962.20" y2="203.00" stroke="#e8836f" stroke-width="0.9" />
<line x1="1018.30" y1="259.70" x2="1034.00" y2="249.20" stroke="#cfcfcf" stroke-width="0.9" />
<line x1="891.60" y1="336.20" x2="876.00" y2="342.00" stroke="#7fd4a3" stroke-width="0.9" />
<text x="966.90" y="206.30" font-size="11" fill="#444" textLength="129.50" lengthAdjust="spacingAndGlyphs" >Нерабочая: 12м 58с (2.44%)</text>
<text x="1039.70" y="252.20" font-size="11" fill="#444" textLength="113.00" lengthAdjust="spacingAndGlyphs" >Прочая: 2ч 35м (29.20%)</text>
<text x="758.40" y="345.20" font-size="11" fill="#444" textLength="112.00" lengthAdjust="spacingAndGlyphs" >Рабочая: 6ч 3м (68.36%)</text>
<line x1="1320.50" y1="193.00" x2="1320.50" y2="368.20" stroke="#dcdcdc" stroke-width="1" />
<line x1="1320.00" y1="368.50" x2="1894.00" y2="368.50" stroke="#dcdcdc" stroke-width="1" />
<text x="1316.20" y="214.10" font-size="10.3" fill="#444" text-anchor="end" textLength="10.50" lengthAdjust="spacingAndGlyphs" >1ч</text>
<text x="1316.20" y="265.90" font-size="10.3" fill="#444" text-anchor="end" textLength="10.50" lengthAdjust="spacingAndGlyphs" >1ч</text>
<text x="1316.20" y="317.60" font-size="10.3" fill="#444" text-anchor="end" textLength="18.50" lengthAdjust="spacingAndGlyphs" >33м</text>
<text x="1316.20" y="368.20" font-size="10.3" fill="#444" text-anchor="end" textLength="6.00" lengthAdjust="spacingAndGlyphs" >0</text>
<rect x="1329.10" y="329.70" width="18.60" height="3.30" fill="#b1b4b5" />
<rect x="1329.10" y="333.00" width="18.60" height="35.20" fill="#28b463" />
<line x1="1338.40" y1="368.20" x2="1338.40" y2="372.70" stroke="#dcdcdc" stroke-width="1" />
<text x="0.00" y="0.00" font-size="10.7" fill="#333" textLength="36.00" lengthAdjust="spacingAndGlyphs" transform="translate(1341.80,325.40) rotate(-90)">24м 40с</text>
<text x="0.00" y="0.00" font-size="10.3" fill="#444" text-anchor="end" textLength="49.00" lengthAdjust="spacingAndGlyphs" transform="translate(1338.00,377.20) rotate(-35)">04.07.2022</text>
<rect x="1359.02" y="270.00" width="18.60" height="59.00" fill="#b1b4b5" />
<rect x="1359.02" y="329.00" width="18.60" height="6.00" fill="#e74c3c" />
<rect x="1359.02" y="335.00" width="18.60" height="0.80" fill="#fff" />
<rect x="1359.02" y="335.80" width="18.60" height="32.40" fill="#28b463" />
<line x1="1368.32" y1="368.20" x2="1368.32" y2="372.70" stroke="#dcdcdc" stroke-width="1" />
<text x="0.00" y="0.00" font-size="10.7" fill="#333" textLength="25.00" lengthAdjust="spacingAndGlyphs" transform="translate(1371.72,265.70) rotate(-90)">1ч 4м</text>
<text x="0.00" y="0.00" font-size="10.3" fill="#444" text-anchor="end" textLength="49.00" lengthAdjust="spacingAndGlyphs" transform="translate(1367.92,377.20) rotate(-35)">05.07.2022</text>
<rect x="1388.94" y="305.90" width="18.60" height="28.10" fill="#b1b4b5" />
<rect x="1388.94" y="334.00" width="18.60" height="34.20" fill="#28b463" />
<line x1="1398.24" y1="368.20" x2="1398.24" y2="372.70" stroke="#dcdcdc" stroke-width="1" />
<text x="0.00" y="0.00" font-size="10.7" fill="#333" textLength="36.00" lengthAdjust="spacingAndGlyphs" transform="translate(1401.64,301.60) rotate(-90)">40м 45с</text>
<text x="0.00" y="0.00" font-size="10.3" fill="#444" text-anchor="end" textLength="49.00" lengthAdjust="spacingAndGlyphs" transform="translate(1397.84,377.20) rotate(-35)">08.07.2022</text>
<line x1="1428.16" y1="368.20" x2="1428.16" y2="372.70" stroke="#dcdcdc" stroke-width="1" />
<text x="0.00" y="0.00" font-size="10.7" fill="#333" textLength="15.50" lengthAdjust="spacingAndGlyphs" transform="translate(1431.56,363.90) rotate(-90)">37с</text>
<text x="0.00" y="0.00" font-size="10.3" fill="#444" text-anchor="end" textLength="49.00" lengthAdjust="spacingAndGlyphs" transform="translate(1427.76,377.20) rotate(-35)">11.07.2022</text>
<line x1="1458.08" y1="368.20" x2="1458.08" y2="372.70" stroke="#dcdcdc" stroke-width="1" />
<text x="0.00" y="0.00" font-size="10.7" fill="#333" textLength="15.50" lengthAdjust="spacingAndGlyphs" transform="translate(1461.48,363.90) rotate(-90)">45с</text>
<text x="0.00" y="0.00" font-size="10.3" fill="#444" text-anchor="end" textLength="49.00" lengthAdjust="spacingAndGlyphs" transform="translate(1457.68,377.20) rotate(-35)">12.07.2022</text>
<rect x="1478.70" y="329.00" width="18.60" height="10.00" fill="#b1b4b5" />
<rect x="1478.70" y="339.00" width="18.60" height="11.80" fill="#e74c3c" />
<rect x="1478.70" y="350.80" width="18.60" height="0.80" fill="#fff" />
<rect x="1478.70" y="351.60" width="18.60" height="16.60" fill="#28b463" />
<line x1="1488.00" y1="368.20" x2="1488.00" y2="372.70" stroke="#dcdcdc" stroke-width="1" />
<text x="0.00" y="0.00" font-size="10.7" fill="#333" textLength="36.00" lengthAdjust="spacingAndGlyphs" transform="translate(1491.40,324.70) rotate(-90)">25м 24с</text>
<text x="0.00" y="0.00" font-size="10.3" fill="#444" text-anchor="end" textLength="49.00" lengthAdjust="spacingAndGlyphs" transform="translate(1487.60,377.20) rotate(-35)">13.07.2022</text>
<rect x="1508.62" y="353.00" width="18.60" height="1.00" fill="#b1b4b5" />
<rect x="1508.62" y="354.00" width="18.60" height="14.20" fill="#28b463" />
<line x1="1517.92" y1="368.20" x2="1517.92" y2="372.70" stroke="#dcdcdc" stroke-width="1" />
<text x="0.00" y="0.00" font-size="10.7" fill="#333" textLength="30.50" lengthAdjust="spacingAndGlyphs" transform="translate(1521.32,348.70) rotate(-90)">10м 5с</text>
<text x="0.00" y="0.00" font-size="10.3" fill="#444" text-anchor="end" textLength="49.00" lengthAdjust="spacingAndGlyphs" transform="translate(1517.52,377.20) rotate(-35)">14.07.2022</text>
<rect x="1538.54" y="339.00" width="18.60" height="3.70" fill="#b1b4b5" />
<rect x="1538.54" y="342.70" width="18.60" height="25.50" fill="#28b463" />
<line x1="1547.84" y1="368.20" x2="1547.84" y2="372.70" stroke="#dcdcdc" stroke-width="1" />
<text x="0.00" y="0.00" font-size="10.7" fill="#333" textLength="36.00" lengthAdjust="spacingAndGlyphs" transform="translate(1551.24,334.70) rotate(-90)">18м 59с</text>
<text x="0.00" y="0.00" font-size="10.3" fill="#444" text-anchor="end" textLength="49.00" lengthAdjust="spacingAndGlyphs" transform="translate(1547.44,377.20) rotate(-35)">15.07.2022</text>
<rect x="1568.46" y="357.00" width="18.60" height="11.20" fill="#28b463" />
<line x1="1577.76" y1="368.20" x2="1577.76" y2="372.70" stroke="#dcdcdc" stroke-width="1" />
<text x="0.00" y="0.00" font-size="10.7" fill="#333" textLength="31.00" lengthAdjust="spacingAndGlyphs" transform="translate(1581.16,352.70) rotate(-90)">7м 44с</text>
<text x="0.00" y="0.00" font-size="10.3" fill="#444" text-anchor="end" textLength="49.00" lengthAdjust="spacingAndGlyphs" transform="translate(1577.36,377.20) rotate(-35)">18.07.2022</text>
<rect x="1598.38" y="354.00" width="18.60" height="14.20" fill="#b1b4b5" />
<line x1="1607.68" y1="368.20" x2="1607.68" y2="372.70" stroke="#dcdcdc" stroke-width="1" />
<text x="0.00" y="0.00" font-size="10.7" fill="#333" textLength="25.50" lengthAdjust="spacingAndGlyphs" transform="translate(1611.08,349.70) rotate(-90)">9м 2с</text>
<text x="0.00" y="0.00" font-size="10.3" fill="#444" text-anchor="end" textLength="49.00" lengthAdjust="spacingAndGlyphs" transform="translate(1607.28,377.20) rotate(-35)">19.07.2022</text>
<rect x="1628.30" y="333.70" width="18.60" height="4.00" fill="#b1b4b5" />
<rect x="1628.30" y="337.70" width="18.60" height="30.50" fill="#28b463" />
<line x1="1637.60" y1="368.20" x2="1637.60" y2="372.70" stroke="#dcdcdc" stroke-width="1" />
<text x="0.00" y="0.00" font-size="10.7" fill="#333" textLength="36.00" lengthAdjust="spacingAndGlyphs" transform="translate(1641.00,329.40) rotate(-90)">21м 59с</text>
<text x="0.00" y="0.00" font-size="10.3" fill="#444" text-anchor="end" textLength="49.00" lengthAdjust="spacingAndGlyphs" transform="translate(1637.20,377.20) rotate(-35)">26.07.2022</text>
<rect x="1658.22" y="317.70" width="18.60" height="3.00" fill="#b1b4b5" />
<rect x="1658.22" y="320.70" width="18.60" height="2.30" fill="#e74c3c" />
<rect x="1658.22" y="323.00" width="18.60" height="45.20" fill="#28b463" />
<line x1="1667.52" y1="368.20" x2="1667.52" y2="372.70" stroke="#dcdcdc" stroke-width="1" />
<text x="0.00" y="0.00" font-size="10.7" fill="#333" textLength="31.00" lengthAdjust="spacingAndGlyphs" transform="translate(1670.92,313.40) rotate(-90)">33м 9с</text>
<text x="0.00" y="0.00" font-size="10.3" fill="#444" text-anchor="end" textLength="49.00" lengthAdjust="spacingAndGlyphs" transform="translate(1667.12,377.20) rotate(-35)">28.07.2022</text>
<rect x="1688.14" y="342.70" width="18.60" height="25.50" fill="#28b463" />
<line x1="1697.44" y1="368.20" x2="1697.44" y2="372.70" stroke="#dcdcdc" stroke-width="1" />
<text x="0.00" y="0.00" font-size="10.7" fill="#333" textLength="36.00" lengthAdjust="spacingAndGlyphs" transform="translate(1700.84,338.40) rotate(-90)">16м 25с</text>
<text x="0.00" y="0.00" font-size="10.3" fill="#444" text-anchor="end" textLength="49.00" lengthAdjust="spacingAndGlyphs" transform="translate(1697.04,377.20) rotate(-35)">29.07.2022</text>
<rect x="1718.06" y="232.80" width="18.60" height="21.10" fill="#b1b4b5" />
<rect x="1718.06" y="253.90" width="18.60" height="114.30" fill="#28b463" />
<line x1="1727.36" y1="368.20" x2="1727.36" y2="372.70" stroke="#dcdcdc" stroke-width="1" />
<text x="0.00" y="0.00" font-size="10.7" fill="#333" textLength="31.00" lengthAdjust="spacingAndGlyphs" transform="translate(1730.76,228.50) rotate(-90)">1ч 28м</text>
<text x="0.00" y="0.00" font-size="10.3" fill="#444" text-anchor="end" textLength="49.00" lengthAdjust="spacingAndGlyphs" transform="translate(1726.96,377.20) rotate(-35)">01.08.2022</text>
<line x1="1757.28" y1="368.20" x2="1757.28" y2="372.70" stroke="#dcdcdc" stroke-width="1" />
<text x="0.00" y="0.00" font-size="10.7" fill="#333" textLength="15.50" lengthAdjust="spacingAndGlyphs" transform="translate(1760.68,363.90) rotate(-90)">43с</text>
<text x="0.00" y="0.00" font-size="10.3" fill="#444" text-anchor="end" textLength="49.00" lengthAdjust="spacingAndGlyphs" transform="translate(1756.88,377.20) rotate(-35)">04.08.2022</text>
<rect x="1777.90" y="352.70" width="18.60" height="15.50" fill="#28b463" />
<line x1="1787.20" y1="368.20" x2="1787.20" y2="372.70" stroke="#dcdcdc" stroke-width="1" />
<text x="0.00" y="0.00" font-size="10.7" fill="#333" textLength="30.50" lengthAdjust="spacingAndGlyphs" transform="translate(1790.60,348.40) rotate(-90)">10м 5с</text>
<text x="0.00" y="0.00" font-size="10.3" fill="#444" text-anchor="end" textLength="49.00" lengthAdjust="spacingAndGlyphs" transform="translate(1786.80,377.20) rotate(-35)">10.08.2022</text>
<rect x="1807.82" y="322.70" width="18.60" height="12.00" fill="#b1b4b5" />
<rect x="1807.82" y="334.70" width="18.60" height="33.50" fill="#28b463" />
<line x1="1817.12" y1="368.20" x2="1817.12" y2="372.70" stroke="#dcdcdc" stroke-width="1" />
<text x="0.00" y="0.00" font-size="10.7" fill="#333" textLength="36.00" lengthAdjust="spacingAndGlyphs" transform="translate(1820.52,318.40) rotate(-90)">29м 11с</text>
<text x="0.00" y="0.00" font-size="10.3" fill="#444" text-anchor="end" textLength="49.00" lengthAdjust="spacingAndGlyphs" transform="translate(1816.72,377.20) rotate(-35)">11.08.2022</text>
<rect x="1837.74" y="192.70" width="18.60" height="70.20" fill="#b1b4b5" />
<rect x="1837.74" y="262.90" width="18.60" height="105.30" fill="#28b463" />
<line x1="1847.04" y1="368.20" x2="1847.04" y2="372.70" stroke="#dcdcdc" stroke-width="1" />
<text x="0.00" y="0.00" font-size="10.7" fill="#333" textLength="31.00" lengthAdjust="spacingAndGlyphs" transform="translate(1850.44,229.50) rotate(-90)">1ч 54м</text>
<text x="0.00" y="0.00" font-size="10.3" fill="#444" text-anchor="end" textLength="49.00" lengthAdjust="spacingAndGlyphs" transform="translate(1846.64,377.20) rotate(-35)">12.08.2022</text>
<rect x="1867.66" y="343.70" width="18.60" height="8.90" fill="#b1b4b5" />
<rect x="1867.66" y="352.60" width="18.60" height="0.80" fill="#fff" />
<rect x="1867.66" y="353.40" width="18.60" height="14.80" fill="#28b463" />
<line x1="1876.96" y1="368.20" x2="1876.96" y2="372.70" stroke="#dcdcdc" stroke-width="1" />
<text x="0.00" y="0.00" font-size="10.7" fill="#333" textLength="36.00" lengthAdjust="spacingAndGlyphs" transform="translate(1880.36,339.40) rotate(-90)">15м 26с</text>
<text x="0.00" y="0.00" font-size="10.3" fill="#444" text-anchor="end" textLength="49.00" lengthAdjust="spacingAndGlyphs" transform="translate(1876.56,377.20) rotate(-35)">17.08.2022</text>
<rect x="1279.70" y="459.20" width="594.10" height="10.60" fill="#eeeeee" />
<line x1="165.70" y1="447.80" x2="165.70" y2="628.00" stroke="#e1d2e6" stroke-width="1" />
<line x1="258.30" y1="447.80" x2="258.30" y2="628.00" stroke="#e1d2e6" stroke-width="1" />
<text x="258.30" y="635.70" font-size="8.1" fill="#333" text-anchor="middle" textLength="20.70" lengthAdjust="spacingAndGlyphs" >03:00</text>
<line x1="360.56" y1="447.80" x2="360.56" y2="628.00" stroke="#e1d2e6" stroke-width="1" />
<text x="360.56" y="635.70" font-size="8.1" fill="#333" text-anchor="middle" textLength="20.70" lengthAdjust="spacingAndGlyphs" >04:00</text>
<line x1="462.82" y1="447.80" x2="462.82" y2="628.00" stroke="#e1d2e6" stroke-width="1" />
<text x="462.82" y="635.70" font-size="8.1" fill="#333" text-anchor="middle" textLength="20.70" lengthAdjust="spacingAndGlyphs" >05:00</text>
<line x1="565.08" y1="447.80" x2="565.08" y2="628.00" stroke="#e1d2e6" stroke-width="1" />
<text x="565.08" y="635.70" font-size="8.1" fill="#333" text-anchor="middle" textLength="20.70" lengthAdjust="spacingAndGlyphs" >06:00</text>
<line x1="667.34" y1="447.80" x2="667.34" y2="628.00" stroke="#e1d2e6" stroke-width="1" />
<text x="667.34" y="635.70" font-size="8.1" fill="#333" text-anchor="middle" textLength="20.70" lengthAdjust="spacingAndGlyphs" >07:00</text>
<line x1="769.60" y1="447.80" x2="769.60" y2="628.00" stroke="#e1d2e6" stroke-width="1" />
<text x="769.60" y="635.70" font-size="8.1" fill="#333" text-anchor="middle" textLength="20.70" lengthAdjust="spacingAndGlyphs" >08:00</text>
<line x1="871.86" y1="447.80" x2="871.86" y2="628.00" stroke="#e1d2e6" stroke-width="1" />
<text x="871.86" y="635.70" font-size="8.1" fill="#333" text-anchor="middle" textLength="20.70" lengthAdjust="spacingAndGlyphs" >09:00</text>
<line x1="974.12" y1="447.80" x2="974.12" y2="628.00" stroke="#e1d2e6" stroke-width="1" />
<text x="974.12" y="635.70" font-size="8.1" fill="#333" text-anchor="middle" textLength="20.70" lengthAdjust="spacingAndGlyphs" >10:00</text>
<line x1="1076.38" y1="447.80" x2="1076.38" y2="628.00" stroke="#e1d2e6" stroke-width="1" />
<text x="1076.38" y="635.70" font-size="8.1" fill="#333" text-anchor="middle" textLength="20.70" lengthAdjust="spacingAndGlyphs" >11:00</text>
<line x1="1178.64" y1="447.80" x2="1178.64" y2="628.00" stroke="#e1d2e6" stroke-width="1" />
<text x="1178.64" y="635.70" font-size="8.1" fill="#333" text-anchor="middle" textLength="20.70" lengthAdjust="spacingAndGlyphs" >12:00</text>
<line x1="1280.90" y1="447.80" x2="1280.90" y2="628.00" stroke="#e1d2e6" stroke-width="1" />
<text x="1280.90" y="635.70" font-size="8.1" fill="#333" text-anchor="middle" textLength="20.70" lengthAdjust="spacingAndGlyphs" >13:00</text>
<line x1="1383.16" y1="447.80" x2="1383.16" y2="628.00" stroke="#e1d2e6" stroke-width="1" />
<text x="1383.16" y="635.70" font-size="8.1" fill="#333" text-anchor="middle" textLength="20.70" lengthAdjust="spacingAndGlyphs" >14:00</text>
<line x1="1485.42" y1="447.80" x2="1485.42" y2="628.00" stroke="#e1d2e6" stroke-width="1" />
<text x="1485.42" y="635.70" font-size="8.1" fill="#333" text-anchor="middle" textLength="20.70" lengthAdjust="spacingAndGlyphs" >15:00</text>
<line x1="1587.68" y1="447.80" x2="1587.68" y2="628.00" stroke="#e1d2e6" stroke-width="1" />
<text x="1587.68" y="635.70" font-size="8.1" fill="#333" text-anchor="middle" textLength="20.70" lengthAdjust="spacingAndGlyphs" >16:00</text>
<line x1="1689.94" y1="447.80" x2="1689.94" y2="628.00" stroke="#e1d2e6" stroke-width="1" />
<text x="1689.94" y="635.70" font-size="8.1" fill="#333" text-anchor="middle" textLength="20.70" lengthAdjust="spacingAndGlyphs" >17:00</text>
<line x1="1792.20" y1="447.80" x2="1792.20" y2="628.00" stroke="#e1d2e6" stroke-width="1" />
<text x="1792.20" y="635.70" font-size="8.1" fill="#333" text-anchor="middle" textLength="20.70" lengthAdjust="spacingAndGlyphs" >18:00</text>
<line x1="11.00" y1="483.30" x2="165.50" y2="483.30" stroke="#e0d2e5" stroke-width="1" stroke-dasharray="3.5 3.4"/>
<line x1="165.50" y1="483.30" x2="1874.00" y2="483.30" stroke="#f2eef4" stroke-width="1" />
<line x1="165.50" y1="483.30" x2="1874.00" y2="483.30" stroke="#e0d3e4" stroke-width="1" stroke-dasharray="3.5 3.4"/>
<line x1="165.50" y1="513.40" x2="1874.00" y2="513.40" stroke="#e4e4e4" stroke-width="1" />
<line x1="11.00" y1="544.50" x2="165.50" y2="544.50" stroke="#e0d2e5" stroke-width="1" stroke-dasharray="3.5 3.4"/>
<line x1="165.50" y1="544.50" x2="1874.00" y2="544.50" stroke="#f0eaf2" stroke-width="1" />
<line x1="165.50" y1="544.50" x2="1874.00" y2="544.50" stroke="#e0d3e4" stroke-width="1" stroke-dasharray="3.5 3.4"/>
<line x1="165.50" y1="574.80" x2="1874.00" y2="574.80" stroke="#e4e4e4" stroke-width="1" />
<line x1="165.50" y1="605.70" x2="1874.00" y2="605.70" stroke="#e4e4e4" stroke-width="1" />
<line x1="11.00" y1="627.90" x2="1874.00" y2="627.90" stroke="#dfcde3" stroke-width="1.4" />
<text x="152.20" y="467.90" font-size="10.2" fill="#444" text-anchor="end" textLength="102.80" lengthAdjust="spacingAndGlyphs" >Berezhnaya Anastasiya</text>
<text x="152.20" y="497.70" font-size="10.2" fill="#1a1a1a" font-weight="bold" text-anchor="end" textLength="61.50" lengthAdjust="spacingAndGlyphs" >12.08.22 (Пт)</text>
<text x="152.20" y="528.50" font-size="10.2" fill="#444" text-anchor="end" textLength="102.80" lengthAdjust="spacingAndGlyphs" >Berezhnaya Anastasiya</text>
<text x="152.20" y="558.80" font-size="10.2" fill="#1a1a1a" font-weight="bold" text-anchor="end" textLength="61.50" lengthAdjust="spacingAndGlyphs" >11.08.22 (Чт)</text>
<text x="152.20" y="589.60" font-size="10.2" fill="#444" text-anchor="end" textLength="102.80" lengthAdjust="spacingAndGlyphs" >Berezhnaya Anastasiya</text>
<rect x="1251.20" y="455.90" width="7.40" height="14.20" fill="#28b463" />
<rect x="1254.70" y="455.90" width="0.80" height="14.20" fill="#bfe8cf" />
<rect x="1281.80" y="455.90" width="8.10" height="14.20" fill="#28b463" />
<rect x="1301.90" y="455.90" width="7.80" height="14.20" fill="#b1b4b5" />
<rect x="1167.20" y="520.60" width="6.40" height="11.40" fill="#eeeeee" />
<rect x="1244.50" y="520.60" width="11.70" height="11.40" fill="#eeeeee" />
<rect x="1264.90" y="520.60" width="157.60" height="11.40" fill="#eeeeee" />
<rect x="1143.00" y="517.20" width="24.20" height="14.20" fill="#28b463" />
<rect x="1144.40" y="517.20" width="0.70" height="14.20" fill="#bfe8cf" />
<rect x="1173.70" y="517.20" width="0.70" height="14.20" fill="#a4a7a8" />
<rect x="1175.40" y="517.20" width="0.70" height="14.20" fill="#a4a7a8" />
<rect x="1177.00" y="517.20" width="0.70" height="14.20" fill="#a4a7a8" />
<rect x="1178.80" y="517.20" width="5.30" height="14.20" fill="#b1b4b5" />
<rect x="1185.80" y="517.20" width="9.10" height="14.20" fill="#b1b4b5" />
<rect x="1198.00" y="517.20" width="46.50" height="14.20" fill="#b1b4b5" />
<rect x="1256.20" y="517.20" width="8.70" height="14.20" fill="#b1b4b5" />
<rect x="1267.80" y="517.20" width="20.80" height="14.20" fill="#28b463" />
<rect x="1292.80" y="517.20" width="8.00" height="14.20" fill="#28b463" />
<rect x="1303.40" y="517.20" width="7.40" height="14.20" fill="#28b463" />
<rect x="1318.80" y="517.20" width="7.60" height="14.20" fill="#28b463" />
<rect x="1341.00" y="517.20" width="7.60" height="14.20" fill="#28b463" />
<rect x="1351.20" y="517.20" width="7.60" height="14.20" fill="#28b463" />
<rect x="1367.40" y="517.20" width="7.60" height="14.20" fill="#28b463" />
<rect x="1389.20" y="517.20" width="7.60" height="14.20" fill="#28b463" />
<rect x="1402.70" y="517.20" width="7.70" height="14.20" fill="#28b463" />
<rect x="1421.00" y="517.20" width="1.40" height="14.20" fill="#28b463" />
<rect x="1503.00" y="581.60" width="65.20" height="11.60" fill="#eeeeee" />
<rect x="1501.10" y="578.80" width="1.90" height="14.20" fill="#28b463" />
<rect x="1503.00" y="578.80" width="4.90" height="14.20" fill="#e4e4e4" />
<rect x="1507.90" y="578.80" width="8.60" height="14.20" fill="#b1b4b5" />
<rect x="1517.60" y="578.80" width="21.30" height="14.20" fill="#28b463" />
<rect x="1525.20" y="578.80" width="0.80" height="14.20" fill="#bfe8cf" />
<rect x="1556.30" y="578.80" width="7.80" height="14.20" fill="#28b463" />
<rect x="1565.40" y="578.80" width="2.90" height="14.20" fill="#28b463" />
<line x1="872.00" y1="471.60" x2="1792.20" y2="471.60" stroke="#2b7de9" stroke-width="2.2" />
<path d="M872 472.6 V465.0 L878.6 470.6 Z" fill="#2b7de9" />
<path d="M1792.2 472.6 V465.0 L1785.6 470.6 Z" fill="#2b7de9" />
<line x1="872.00" y1="532.90" x2="1792.20" y2="532.90" stroke="#2b7de9" stroke-width="2.2" />
<path d="M872 533.9 V526.3 L878.6 531.9 Z" fill="#2b7de9" />
<path d="M1792.2 533.9 V526.3 L1785.6 531.9 Z" fill="#2b7de9" />
<line x1="872.00" y1="594.20" x2="1792.20" y2="594.20" stroke="#2b7de9" stroke-width="2.2" />
<path d="M872 595.2 V587.6 L878.6 593.2 Z" fill="#2b7de9" />
<path d="M1792.2 595.2 V587.6 L1785.6 593.2 Z" fill="#2b7de9" />
<rect x="1874.00" y="447.40" width="21.00" height="179.20" fill="#efefef" />
<rect x="1874.50" y="452.50" width="20.00" height="30.00" fill="#fff" stroke="#555" stroke-width="1"/>
<rect x="1874.00" y="454.90" width="14.60" height="4.60" fill="#c2c2c2" />
<rect x="1874.00" y="467.00" width="12.30" height="4.60" fill="#c2c2c2" />
<rect x="1874.00" y="478.70" width="14.60" height="4.60" fill="#c2c2c2" />
<rect x="1874.00" y="490.70" width="1.00" height="4.60" fill="#c2c2c2" />
<rect x="1874.00" y="502.60" width="14.80" height="4.60" fill="#c2c2c2" />
<rect x="1874.00" y="514.00" width="11.60" height="4.60" fill="#c2c2c2" />
<rect x="1874.00" y="526.10" width="7.40" height="4.60" fill="#c2c2c2" />
<rect x="1874.00" y="537.90" width="17.60" height="4.60" fill="#c2c2c2" />
<rect x="1876.00" y="549.70" width="18.00" height="4.60" fill="#c2c2c2" />
<rect x="1874.00" y="561.90" width="6.50" height="4.60" fill="#c2c2c2" />
<rect x="1874.00" y="573.30" width="18.00" height="4.60" fill="#c2c2c2" />
<rect x="1876.00" y="585.40" width="18.70" height="4.60" fill="#c2c2c2" />
<rect x="1874.00" y="597.20" width="11.80" height="4.60" fill="#c2c2c2" />
<rect x="1874.00" y="609.10" width="5.00" height="4.60" fill="#c2c2c2" />
<rect x="1874.00" y="621.00" width="7.00" height="4.60" fill="#c2c2c2" />
<path d="M166 658 L168.6 655.6 L170 656.8 L172 654.8 L174 658 Z" fill="#bdbdbd" />
<line x1="181.00" y1="656.00" x2="233.00" y2="656.00" stroke="#ececec" stroke-width="1.2" />
<circle cx="181.30" cy="656.00" r="3.40" fill="#b4b4b4" />
<path d="M239 658.4 L242.6 653 L245 656 L247.4 652.6 L250.6 658.4 Z" fill="#b4b4b4" />
<rect x="258.30" y="652.60" width="1615.50" height="5.80" fill="#e4e4e4" />
<rect x="436.70" y="652.60" width="1437.10" height="5.80" fill="#b9b9b9" />
<line x1="52.80" y1="718.20" x2="52.80" y2="927.00" stroke="#dcdcdc" stroke-width="1" />
<line x1="52.30" y1="927.30" x2="619.00" y2="927.30" stroke="#dcdcdc" stroke-width="1" />
<text x="48.40" y="736.60" font-size="10.3" fill="#444" text-anchor="end" textLength="10.50" lengthAdjust="spacingAndGlyphs" >3ч</text>
<text x="48.40" y="768.30" font-size="10.3" fill="#444" text-anchor="end" textLength="10.50" lengthAdjust="spacingAndGlyphs" >2ч</text>
<text x="48.40" y="800.30" font-size="10.3" fill="#444" text-anchor="end" textLength="10.50" lengthAdjust="spacingAndGlyphs" >2ч</text>
<text x="48.40" y="832.00" font-size="10.3" fill="#444" text-anchor="end" textLength="10.50" lengthAdjust="spacingAndGlyphs" >1ч</text>
<text x="48.40" y="863.20" font-size="10.3" fill="#444" text-anchor="end" textLength="10.50" lengthAdjust="spacingAndGlyphs" >1ч</text>
<text x="48.40" y="895.40" font-size="10.3" fill="#444" text-anchor="end" textLength="18.50" lengthAdjust="spacingAndGlyphs" >33м</text>
<text x="48.40" y="927.20" font-size="10.3" fill="#444" text-anchor="end" textLength="6.00" lengthAdjust="spacingAndGlyphs" >0</text>
<clipPath id="botc"><rect x="0" y="700" width="1916" height="243.7"/></clipPath>
<g clip-path="url(#botc)">
<rect x="80.10" y="898.00" width="54.80" height="29.00" fill="#28b463" />
<line x1="107.50" y1="927.00" x2="107.50" y2="931.50" stroke="#dcdcdc" stroke-width="1" />
<text x="0.00" y="0.00" font-size="10.7" fill="#333" textLength="30.50" lengthAdjust="spacingAndGlyphs" transform="translate(110.90,893.70) rotate(-90)">31м 6с</text>
<text x="0.00" y="0.00" font-size="10.3" fill="#444" text-anchor="end" transform="translate(107.10,936.00) rotate(-35)">8:00 - 9:59</text>
<rect x="172.00" y="853.90" width="54.80" height="17.90" fill="#b1b4b5" />
<rect x="172.00" y="871.80" width="54.80" height="8.10" fill="#e74c3c" />
<rect x="172.00" y="879.90" width="54.80" height="47.10" fill="#28b463" />
<line x1="199.40" y1="927.00" x2="199.40" y2="931.50" stroke="#dcdcdc" stroke-width="1" />
<text x="0.00" y="0.00" font-size="10.7" fill="#333" textLength="31.00" lengthAdjust="spacingAndGlyphs" transform="translate(202.80,849.60) rotate(-90)">1ч 17м</text>
<text x="0.00" y="0.00" font-size="10.3" fill="#444" text-anchor="end" transform="translate(199.00,936.00) rotate(-35)">10:00 - 11:59</text>
<rect x="263.10" y="718.00" width="54.80" height="79.90" fill="#b1b4b5" />
<rect x="263.10" y="797.90" width="54.80" height="1.10" fill="#e74c3c" />
<rect x="263.10" y="799.00" width="54.80" height="128.00" fill="#28b463" />
<line x1="290.50" y1="927.00" x2="290.50" y2="931.50" stroke="#dcdcdc" stroke-width="1" />
<text x="0.00" y="0.00" font-size="10.7" fill="#333" textLength="31.60" lengthAdjust="spacingAndGlyphs" transform="translate(293.90,754.30) rotate(-90)">3ч 38м</text>
<text x="0.00" y="0.00" font-size="10.3" fill="#444" text-anchor="end" transform="translate(290.10,936.00) rotate(-35)">12:00 - 13:59</text>
<rect x="354.00" y="823.00" width="54.80" height="32.20" fill="#b1b4b5" />
<rect x="354.00" y="855.20" width="54.80" height="0.80" fill="#fff" />
<rect x="354.00" y="856.00" width="54.80" height="71.00" fill="#28b463" />
<line x1="381.40" y1="927.00" x2="381.40" y2="931.50" stroke="#dcdcdc" stroke-width="1" />
<text x="0.00" y="0.00" font-size="10.7" fill="#333" textLength="31.00" lengthAdjust="spacingAndGlyphs" transform="translate(384.80,818.70) rotate(-90)">1ч 49м</text>
<text x="0.00" y="0.00" font-size="10.3" fill="#444" text-anchor="end" transform="translate(381.00,936.00) rotate(-35)">14:00 - 15:59</text>
<rect x="445.00" y="839.00" width="54.80" height="16.70" fill="#b1b4b5" />
<rect x="445.00" y="855.70" width="54.80" height="3.20" fill="#e74c3c" />
<rect x="445.00" y="858.90" width="54.80" height="0.90" fill="#fff" />
<rect x="445.00" y="859.80" width="54.80" height="67.20" fill="#28b463" />
<line x1="472.40" y1="927.00" x2="472.40" y2="931.50" stroke="#dcdcdc" stroke-width="1" />
<text x="0.00" y="0.00" font-size="10.7" fill="#333" textLength="31.00" lengthAdjust="spacingAndGlyphs" transform="translate(475.80,834.70) rotate(-90)">1ч 33м</text>
<text x="0.00" y="0.00" font-size="10.3" fill="#444" text-anchor="end" transform="translate(472.00,936.00) rotate(-35)">16:00 - 17:59</text>
<rect x="537.10" y="924.80" width="54.80" height="2.20" fill="#28b463" />
<line x1="564.50" y1="927.00" x2="564.50" y2="931.50" stroke="#dcdcdc" stroke-width="1" />
<text x="0.00" y="0.00" font-size="10.7" fill="#333" textLength="31.00" lengthAdjust="spacingAndGlyphs" transform="translate(567.90,920.50) rotate(-90)">2м 38с</text>
<text x="0.00" y="0.00" font-size="10.3" fill="#444" text-anchor="end" transform="translate(564.10,936.00) rotate(-35)">18:00 - 19:59</text>
<line x1="765.60" y1="718.20" x2="765.60" y2="944.00" stroke="#dcdcdc" stroke-width="1" />
<line x1="867.50" y1="718.20" x2="867.50" y2="944.00" stroke="#dcdcdc" stroke-width="1" />
<line x1="968.30" y1="718.20" x2="968.30" y2="944.00" stroke="#dcdcdc" stroke-width="1" />
<line x1="1070.20" y1="718.20" x2="1070.20" y2="944.00" stroke="#dcdcdc" stroke-width="1" />
<line x1="1171.40" y1="718.20" x2="1171.40" y2="944.00" stroke="#dcdcdc" stroke-width="1" />
<rect x="766.00" y="726.00" width="381.70" height="14.80" fill="#76d7c4" />
<text x="761.40" y="737.40" font-size="11" fill="#444" text-anchor="end" textLength="51.80" lengthAdjust="spacingAndGlyphs" >Проводник</text>
<text x="1152.70" y="737.20" font-size="11" fill="#333" textLength="31.50" lengthAdjust="spacingAndGlyphs" >5ч 14м</text>
<rect x="766.00" y="751.45" width="143.80" height="14.80" fill="#76d7c4" />
<text x="761.40" y="762.85" font-size="11" fill="#444" text-anchor="end" textLength="35.00" lengthAdjust="spacingAndGlyphs" >Chrome</text>
<text x="914.80" y="762.65" font-size="11" fill="#333" textLength="31.50" lengthAdjust="spacingAndGlyphs" >1ч 58м</text>
<rect x="766.00" y="776.90" width="24.80" height="14.80" fill="#76d7c4" />
<text x="761.40" y="788.30" font-size="11" fill="#444" text-anchor="end" textLength="53.50" lengthAdjust="spacingAndGlyphs" >Thunderbird</text>
<text x="795.80" y="788.10" font-size="11" fill="#333" textLength="37.50" lengthAdjust="spacingAndGlyphs" >20м 34с</text>
<rect x="766.00" y="802.35" width="21.90" height="14.80" fill="#76d7c4" />
<text x="761.40" y="813.75" font-size="11" fill="#444" text-anchor="end" textLength="80.30" lengthAdjust="spacingAndGlyphs" >Telegram Desktop</text>
<text x="792.90" y="813.55" font-size="11" fill="#333" textLength="37.50" lengthAdjust="spacingAndGlyphs" >18м 35с</text>
<rect x="766.00" y="827.80" width="18.80" height="14.80" fill="#76d7c4" />
<text x="761.40" y="839.20" font-size="11" fill="#444" text-anchor="end" textLength="48.00" lengthAdjust="spacingAndGlyphs" >LibreOffice</text>
<text x="789.80" y="839.00" font-size="11" fill="#333" textLength="37.50" lengthAdjust="spacingAndGlyphs" >15м 37с</text>
<rect x="766.00" y="853.25" width="17.70" height="14.80" fill="#76d7c4" />
<text x="761.40" y="864.65" font-size="11" fill="#444" text-anchor="end" textLength="26.50" lengthAdjust="spacingAndGlyphs" >Skype</text>
<text x="788.70" y="864.45" font-size="11" fill="#333" textLength="37.50" lengthAdjust="spacingAndGlyphs" >14м 59с</text>
<rect x="766.00" y="878.70" width="18.80" height="14.80" fill="#76d7c4" />
<rect x="771.30" y="878.70" width="1.30" height="14.80" fill="#fff" />
<rect x="775.70" y="878.70" width="1.30" height="14.80" fill="#fff" />
<rect x="779.30" y="878.70" width="1.10" height="14.80" fill="#fff" />
<text x="761.40" y="890.10" font-size="11" fill="#444" text-anchor="end" textLength="101.50" lengthAdjust="spacingAndGlyphs" >Microsoft® Windows...</text>
<text x="786.00" y="889.90" font-size="11" fill="#333" textLength="37.50" lengthAdjust="spacingAndGlyphs" >12м 14с</text>
<rect x="766.00" y="904.15" width="11.80" height="14.80" fill="#76d7c4" />
<text x="761.40" y="915.55" font-size="11" fill="#444" text-anchor="end" textLength="96.50" lengthAdjust="spacingAndGlyphs" >InfoWatch Device M...</text>
<text x="782.80" y="915.35" font-size="11" fill="#333" textLength="37.50" lengthAdjust="spacingAndGlyphs" >10м 37с</text>
<rect x="766.00" y="929.60" width="1.60" height="14.80" fill="#76d7c4" />
<text x="761.40" y="941.00" font-size="11" fill="#444" text-anchor="end" textLength="89.00" lengthAdjust="spacingAndGlyphs" >Windows Installer ...</text>
<text x="772.60" y="940.80" font-size="11" fill="#333" textLength="26.00" lengthAdjust="spacingAndGlyphs" >2м 3с</text>
<rect x="1232.20" y="710.00" width="24.80" height="224.00" fill="#eeeeee" />
<rect x="1232.70" y="710.50" width="23.80" height="99.80" fill="#fff" stroke="#666" stroke-width="1"/>
<rect x="1233.20" y="713.70" width="19.70" height="5.70" fill="#c6c6c6" />
<rect x="1233.20" y="724.80" width="7.00" height="6.00" fill="#c6c6c6" />
<rect x="1233.20" y="736.00" width="0.70" height="5.00" fill="#999" />
<rect x="1233.20" y="747.20" width="0.70" height="5.00" fill="#999" />
<rect x="1233.20" y="758.40" width="0.70" height="5.00" fill="#999" />
<rect x="1233.20" y="769.60" width="0.70" height="5.00" fill="#999" />
<rect x="1233.20" y="780.80" width="0.70" height="5.00" fill="#999" />
<rect x="1233.20" y="792.00" width="0.70" height="5.00" fill="#999" />
<line x1="1403.30" y1="718.20" x2="1403.30" y2="877.00" stroke="#dcdcdc" stroke-width="1" />
<line x1="1506.50" y1="718.20" x2="1506.50" y2="877.00" stroke="#dcdcdc" stroke-width="1" />
<line x1="1609.30" y1="718.20" x2="1609.30" y2="877.00" stroke="#dcdcdc" stroke-width="1" />
<line x1="1713.50" y1="718.20" x2="1713.50" y2="877.00" stroke="#dcdcdc" stroke-width="1" />
<line x1="1816.40" y1="718.20" x2="1816.40" y2="877.00" stroke="#dcdcdc" stroke-width="1" />
<line x1="1403.00" y1="877.30" x2="1862.00" y2="877.30" stroke="#dcdcdc" stroke-width="1" />
<text x="1403.30" y="894.40" font-size="11" fill="#444" text-anchor="middle" textLength="6.00" lengthAdjust="spacingAndGlyphs" >0</text>
<text x="1506.50" y="894.40" font-size="11" fill="#444" text-anchor="middle" textLength="18.00" lengthAdjust="spacingAndGlyphs" >16м</text>
<text x="1609.30" y="894.40" font-size="11" fill="#444" text-anchor="middle" textLength="18.50" lengthAdjust="spacingAndGlyphs" >33м</text>
<text x="1713.50" y="894.40" font-size="11" fill="#444" text-anchor="middle" textLength="18.50" lengthAdjust="spacingAndGlyphs" >50м</text>
<text x="1816.40" y="894.40" font-size="11" fill="#444" text-anchor="middle" textLength="10.50" lengthAdjust="spacingAndGlyphs" >1ч</text>
<rect x="1403.80" y="726.10" width="380.90" height="14.50" fill="#76d7c4" />
<text x="1398.90" y="737.40" font-size="11" fill="#444" text-anchor="end" textLength="52.30" lengthAdjust="spacingAndGlyphs" >10.70.10.29</text>
<text x="1789.70" y="737.20" font-size="11" fill="#333" textLength="26.00" lengthAdjust="spacingAndGlyphs" >1ч 2м</text>
<rect x="1403.80" y="752.20" width="82.00" height="14.50" fill="#76d7c4" />
<text x="1398.90" y="763.50" font-size="11" fill="#444" text-anchor="end" textLength="74.00" lengthAdjust="spacingAndGlyphs" >mail.google.com</text>
<text x="1490.80" y="763.30" font-size="11" fill="#333" textLength="37.50" lengthAdjust="spacingAndGlyphs" >13м 23с</text>
<rect x="1403.80" y="777.20" width="78.90" height="14.50" fill="#76d7c4" />
<text x="1398.90" y="788.50" font-size="11" fill="#444" text-anchor="end" textLength="32.00" lengthAdjust="spacingAndGlyphs" >vk.com</text>
<text x="1487.70" y="788.30" font-size="11" fill="#333" textLength="37.50" lengthAdjust="spacingAndGlyphs" >12м 58с</text>
<rect x="1403.80" y="802.90" width="64.90" height="14.50" fill="#76d7c4" />
<text x="1398.90" y="814.20" font-size="11" fill="#444" text-anchor="end" textLength="52.00" lengthAdjust="spacingAndGlyphs" >about:blank</text>
<text x="1473.70" y="814.00" font-size="11" fill="#333" textLength="37.50" lengthAdjust="spacingAndGlyphs" >10м 40с</text>
<rect x="1403.80" y="829.00" width="37.90" height="14.50" fill="#76d7c4" />
<text x="1398.90" y="840.30" font-size="11" fill="#444" text-anchor="end" textLength="77.50" lengthAdjust="spacingAndGlyphs" >web.telegram.org</text>
<text x="1446.70" y="840.10" font-size="11" fill="#333" textLength="32.00" lengthAdjust="spacingAndGlyphs" >6м 14с</text>
<rect x="1403.80" y="854.40" width="21.80" height="14.50" fill="#76d7c4" />
<text x="1398.90" y="865.70" font-size="11" fill="#444" text-anchor="end" textLength="66.00" lengthAdjust="spacingAndGlyphs" >whatsapp.com</text>
<text x="1430.60" y="865.50" font-size="11" fill="#333" textLength="32.00" lengthAdjust="spacingAndGlyphs" >3м 36с</text>
<rect x="1870.00" y="710.00" width="25.00" height="149.70" fill="#eeeeee" />
<rect x="1870.50" y="710.50" width="24.00" height="79.70" fill="#fff" stroke="#666" stroke-width="1"/>
<rect x="1871.00" y="714.40" width="19.60" height="7.20" fill="#c6c6c6" />
<rect x="1871.00" y="727.80" width="2.90" height="7.20" fill="#c6c6c6" />
<rect x="1871.00" y="741.00" width="2.90" height="7.20" fill="#c6c6c6" />
<rect x="1871.00" y="754.30" width="2.20" height="7.20" fill="#c6c6c6" />
<rect x="1871.00" y="767.60" width="0.60" height="7.20" fill="#c6c6c6" />
<rect x="1870.00" y="797.00" width="0.80" height="8.00" fill="#ccc" />
<rect x="1870.00" y="810.00" width="0.60" height="8.00" fill="#ddd" />
</g>
<rect x="1910.20" y="152.00" width="5.80" height="794.00" fill="#e6e6e6" />
<rect x="1910.20" y="152.00" width="5.80" height="599.00" fill="#b4b4b4" />
<rect x="0.00" y="943.80" width="1916.00" height="2.20" fill="#16283a" />
<rect x="56.00" y="944.30" width="430.00" height="1.70" fill="#c4c4c4" />
</svg>
</body></html>
